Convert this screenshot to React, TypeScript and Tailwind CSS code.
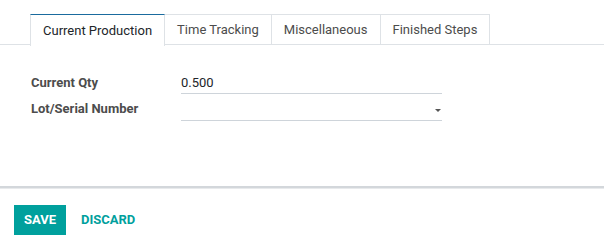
import React from "react";

export default function App() {
  const tabs = ["Current Production", "Time Tracking", "Miscellaneous", "Finished Steps"];
  return (
    <div
      className="w-[604px] h-[251px] bg-white text-[13px] text-[#4c4c4c] overflow-hidden"
      style={{ fontFamily: "Roboto, 'Liberation Sans', sans-serif" }}
    >
      <div className="h-[186px] flex flex-col">
        <div className="mt-[14px] flex border-b border-[#dee2e6] pl-[30px] h-[31px]">
          {tabs.map((t, i) => (
            <div
              key={t}
              className={
                i === 0
                  ? "-mb-px flex items-center px-[12px] border-x border-t border-[#dee2e6] border-t-[#1a6b9e] bg-white text-[#212529] h-[32px]"
                  : "flex items-center px-[12px] border-r border-t border-[#dee2e6] text-[#4c4c4c] h-[31px]"
              }
            >
              {t}
            </div>
          ))}
        </div>
        <div className="mt-[25px] pl-[31px] flex flex-col">
          <div className="flex items-end h-[24px]">
            <div className="w-[150px] font-bold text-[#4c4c4c] pb-[2px]">Current Qty</div>
            <div className="w-[261px] border-b border-[#ced4da] text-[#212529] pb-[1px]">0.500</div>
          </div>
          <div className="flex items-end h-[27px]">
            <div className="w-[150px] font-bold text-[#4c4c4c] pb-[3px]">Lot/Serial Number</div>
            <div className="w-[261px] h-[22px] border-b border-[#ced4da] relative">
              <div className="absolute right-[1px] top-[10px] w-0 h-0 border-l-[3px] border-r-[3px] border-t-[3px] border-l-transparent border-r-transparent border-t-[#555]" />
            </div>
          </div>
        </div>
      </div>
      <div className="h-[2px] bg-[#d3d7db]" />
      <div className="h-[1px] bg-[#e8eaec]" />
      <div className="flex items-center pl-[14px] pt-[16px] gap-[15px]">
        <button className="h-[30px] px-[10px] bg-[#00a09d] text-white font-bold text-[13px] uppercase">
          SAVE
        </button>
        <button className="h-[30px] text-[#00a09d] font-bold text-[13px]">DISCARD</button>
      </div>
    </div>
  );
}
